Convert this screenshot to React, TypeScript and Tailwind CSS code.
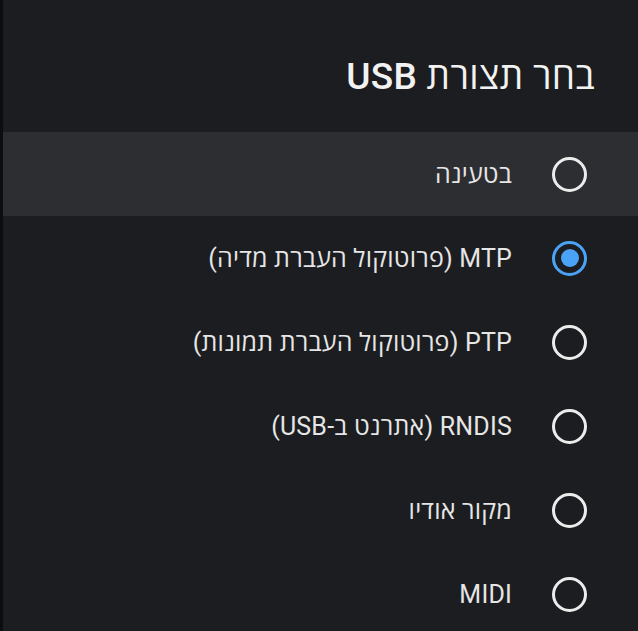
import React, { useState } from 'react';

const OPTIONS = [
  { id: 'charge', label: 'בטעינה' },
  { id: 'mtp', label: 'MTP (פרוטוקול העברת מדיה)' },
  { id: 'ptp', label: 'PTP (פרוטוקול העברת תמונות)' },
  { id: 'rndis', label: 'RNDIS (אתרנט ב-USB)' },
  { id: 'audio', label: 'מקור אודיו' },
  { id: 'midi', label: 'MIDI' },
];

function Radio({ checked }: { checked: boolean }) {
  return (
    <span
      className={`w-[35px] h-[35px] shrink-0 rounded-full border-[3px] flex items-center justify-center ${
        checked ? 'border-[#4ba3f7]' : 'border-[#ececec]'
      }`}
    >
      {checked && <span className="w-[18px] h-[18px] rounded-full bg-[#4ba3f7]" />}
    </span>
  );
}

export default function App() {
  const [selected, setSelected] = useState('mtp');

  return (
    <div
      dir="rtl"
      className="min-h-screen bg-[#1c1d20] border-l-[3px] border-[#0c0d0e] text-[#ececec]"
      style={{ fontFamily: 'Roboto, "Open Sans", "Noto Sans", "DejaVu Sans", sans-serif' }}
    >
      <div className="h-[132px] flex items-center pr-[43px] pt-[20px]">
        <h1 className="text-[37px] font-medium leading-none tracking-[0.3px] text-[#f2f2f2]">בחר תצורת USB</h1>
      </div>

      <div className="flex flex-col">
        {OPTIONS.map((o, i) => (
          <button
            key={o.id}
            onClick={() => setSelected(o.id)}
            className={`h-[84px] flex items-center gap-[40px] pr-[51px] text-right cursor-pointer ${
              i === 0 ? 'bg-[#2d2e32]' : ''
            }`}
          >
            <Radio checked={selected === o.id} />
            <span className="text-[25px] leading-none tracking-[0.2px] text-[#e6e6e6]">{o.label}</span>
          </button>
        ))}
      </div>
    </div>
  );
}
